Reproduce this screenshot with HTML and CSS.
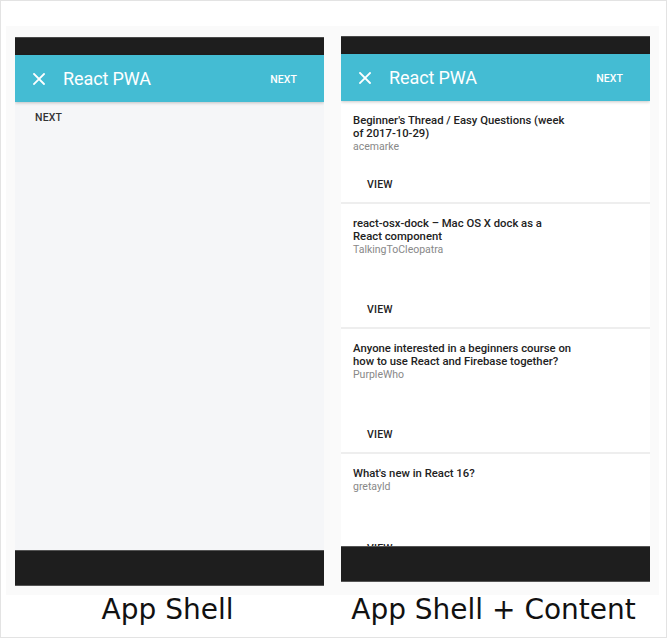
FILE: index.html
```html
<!DOCTYPE html>
<html>
<head>
<meta charset="utf-8">
<link rel="stylesheet" href="styles.css">
</head>
<body>
<div class="frame">
  <div class="stage">
    <div class="phone phone--shell">
      <div class="statusbar"></div>
      <header class="appbar">
        <svg class="close" width="12" height="12" viewBox="0 0 12 12"><path d="M1 1L11 11M11 1L1 11" stroke="#fff" stroke-width="1.8" stroke-linecap="square"/></svg>
        <span class="appbar-title">React PWA</span>
        <span class="appbar-action">NEXT</span>
      </header>
      <main class="content content--shell">
        <span class="shell-next">NEXT</span>
      </main>
      <div class="navbar"></div>
    </div>
    <div class="phone phone--full">
      <div class="statusbar"></div>
      <header class="appbar">
        <svg class="close" width="12" height="12" viewBox="0 0 12 12"><path d="M1 1L11 11M11 1L1 11" stroke="#fff" stroke-width="1.8" stroke-linecap="square"/></svg>
        <span class="appbar-title">React PWA</span>
        <span class="appbar-action">NEXT</span>
      </header>
      <main class="content content--list">
        <article class="card card--a">
          <div class="card-text">
            <div class="card-title">Beginner's Thread / Easy Questions (week of 2017-10-29)</div>
            <div class="card-author">acemarke</div>
          </div>
          <div class="card-actions"><span class="btn">VIEW</span></div>
        </article>
        <article class="card card--b">
          <div class="card-text">
            <div class="card-title">react-osx-dock – Mac OS X dock as a React component</div>
            <div class="card-author">TalkingToCleopatra</div>
          </div>
          <div class="card-actions"><span class="btn">VIEW</span></div>
        </article>
        <article class="card card--b">
          <div class="card-text">
            <div class="card-title">Anyone interested in a beginners course on how to use React and Firebase together?</div>
            <div class="card-author">PurpleWho</div>
          </div>
          <div class="card-actions"><span class="btn">VIEW</span></div>
        </article>
        <article class="card card--c">
          <div class="card-text">
            <div class="card-title">What's new in React 16?</div>
            <div class="card-author">gretayld</div>
          </div>
          <div class="card-actions"><span class="btn">VIEW</span></div>
        </article>
      </main>
      <div class="navbar"></div>
    </div>
  </div>
  <div class="labels">
    <div class="label">App Shell</div>
    <div class="label">App Shell + Content</div>
  </div>
</div>
</body>
</html>
```
FILE: styles.css
```css
* { box-sizing: border-box; }
html, body { margin: 0; padding: 0; background: #fff; }
body { font-family: Roboto, "Liberation Sans", sans-serif; }

.frame {
  width: 667px;
  height: 638px;
  border: 1px solid #e3e3e3;
  padding: 25px 0 0 5px;
}

.stage {
  width: 653px;
  height: 569px;
  background: #fafafa;
  display: flex;
  align-items: flex-start;
  gap: 17px;
  padding: 0 9px;
}

.phone {
  width: 309px;
  display: flex;
  flex-direction: column;
  overflow: hidden;
}
.phone--shell { margin-top: 11px; height: 549px; }
.phone--full { margin-top: 10px; height: 546px; }

.statusbar {
  height: 18px;
  flex: none;
  background: #1e1e1e;
  border-top: 1px solid #4a4a4a;
}

.appbar {
  height: 47px;
  flex: none;
  background: #44bcd3;
  display: flex;
  align-items: center;
  padding: 0 27px 0 18px;
  color: #fff;
  position: relative;
  z-index: 1;
  box-shadow: 0 1px 3px rgba(0,0,0,0.22);
}
.close { flex: none; }
.appbar-title {
  margin-left: 18px;
  font-size: 18px;
  font-weight: 400;
  flex: 1;
  letter-spacing: -0.1px;
}
.appbar-action {
  font-size: 10.5px;
  font-weight: 500;
  letter-spacing: 0.1px;
  margin-top: 2px;
}

.content { flex: 1; overflow: hidden; }
.content--shell {
  background: #f5f6f8;
  padding: 4px 0 0 20px;
}
.shell-next {
  font-size: 10.5px;
  font-weight: 500;
  color: #333;
  letter-spacing: 0.2px;
}

.content--list {
  background: #eeeeee;
  display: flex;
  flex-direction: column;
  gap: 2px;
}

.card {
  flex: none;
  background: #fff;
  display: flex;
  flex-direction: column;
}
.card--a { height: 101px; }
.card--b { height: 123px; }
.card--c { height: 112px; }

.card-text { padding: 13px 12px 0 12px; }
.card-title {
  max-width: 219.5px;
  font-size: 11.3px;
  line-height: 13px;
  font-weight: 500;
  color: #222;
}
.card-author {
  font-size: 10.5px;
  line-height: 13px;
  color: #888;
}
.card-actions {
  margin-top: auto;
  height: 36px;
  display: flex;
  align-items: center;
  padding-left: 26px;
}
.btn {
  font-size: 10.5px;
  font-weight: 500;
  color: #222;
  letter-spacing: 0.2px;
}

.navbar {
  height: 36px;
  flex: none;
  background: #1e1e1e;
  border-top: 1px solid #555;
  border-bottom: 1px solid #555;
}

.labels {
  display: flex;
  gap: 17px;
  padding-left: 9px;
  padding-top: 2px;
}
.label {
  width: 309px;
  text-align: center;
  font-family: "DejaVu Sans", sans-serif;
  font-size: 28px;
  line-height: 26px;
  color: #111;
}
.label:first-child { margin-left: -2px; }
```
